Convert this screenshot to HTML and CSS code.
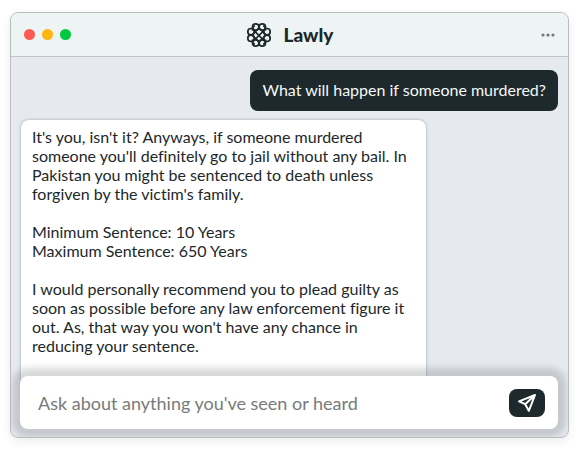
FILE: index.html
```html
<!DOCTYPE html>
<html lang="en">
<head>
<meta charset="utf-8">
<meta name="viewport" content="width=device-width, initial-scale=1">
<title>Lawly</title>
<link rel="stylesheet" href="styles.css">
</head>
<body>
<div class="window">
  <header class="titlebar">
    <div class="lights">
      <span class="light red"></span>
      <span class="light yellow"></span>
      <span class="light green"></span>
    </div>
    <div class="brand">
      <svg class="logo" viewBox="0 0 26 26" aria-hidden="true">
        <g fill="none" stroke="currentColor" stroke-width="1.7" stroke-linejoin="round">
          <circle cx="9.7" cy="5" r="3.2"/>
          <circle cx="16.3" cy="5" r="3.2"/>
          <circle cx="21" cy="9.7" r="3.2"/>
          <circle cx="21" cy="16.3" r="3.2"/>
          <circle cx="16.3" cy="21" r="3.2"/>
          <circle cx="9.7" cy="21" r="3.2"/>
          <circle cx="5" cy="16.3" r="3.2"/>
          <circle cx="5" cy="9.7" r="3.2"/>
          <path d="M7 7.5L18.5 19M7.5 19L19 7.5M13 6L20 13L13 20L6 13Z"/>
          <path d="M6.5 8.5V6.5Q6.5 4 9 4M19.5 8.5V6.5Q19.5 4 17 4M6.5 17.5V19.5Q6.5 22 9 22M19.5 17.5V19.5Q19.5 22 17 22"/>
        </g>
      </svg>
      <h1 class="name">Lawly</h1>
    </div>
    <button class="more" type="button" aria-label="More options">
      <svg viewBox="0 0 14 4" aria-hidden="true"><g fill="currentColor"><circle cx="2" cy="2" r="1.6"/><circle cx="7" cy="2" r="1.6"/><circle cx="12" cy="2" r="1.6"/></g></svg>
    </button>
  </header>
  <main class="chat">
    <p class="message sent">What will happen if someone murdered?</p>
    <div class="message received">
      <p>It's you, isn't it? Anyways, if someone murdered<br>someone you'll definitely go to jail without any bail. In<br>Pakistan you might be sentenced to death unless<br>forgiven by the victim's family.</p>
      <p>Minimum Sentence: 10 Years<br>Maximum Sentence: 650 Years</p>
      <p>I would personally recommend you to plead guilty as<br>soon as possible before any law enforcement figure it<br>out. As, that way you won't have any chance in<br>reducing your sentence.</p>
    </div>
  </main>
  <form class="composer">
    <input class="question" type="text" aria-label="Question" placeholder="Ask about anything you've seen or heard">
    <button class="send" type="button" aria-label="Send">
      <svg viewBox="0 0 20 20" aria-hidden="true"><path d="M18 2L2 8.4L8.2 11.2L11.8 17.8Z M18 2L8.2 11.2" fill="none" stroke="currentColor" stroke-width="2" stroke-linejoin="round"/></svg>
    </button>
  </form>
</div>
</body>
</html>
```
FILE: styles.css
```css
* {
  box-sizing: border-box;
}

body {
  margin: 0;
  padding: 12px 10px 14px;
  min-height: 100vh;
  display: flex;
  background: #fff;
  color: #1d282b;
  font: 16px/19px Lato, sans-serif;
  font-variant-ligatures: none;
}

h1, p {
  margin: 0;
}

button {
  border: 0;
  padding: 0;
  font: inherit;
}

svg {
  display: block;
}

.window {
  position: relative;
  flex: 1;
  min-width: 0;
  display: flex;
  flex-direction: column;
  border: 1px solid #b9bdc2;
  border-radius: 8px;
  background: #e6e9ef;
  overflow: hidden;
  box-shadow: 0 3px 10px rgba(0, 0, 0, 0.08);
}

.titlebar {
  display: grid;
  grid-template-columns: 1fr auto 1fr;
  align-items: center;
  height: 44px;
  padding: 0 13px;
  border-bottom: 1px solid #bfc4c9;
  background: #eef3f4;
}

.lights {
  display: flex;
  gap: 7px;
}

.light {
  width: 11px;
  height: 11px;
  border-radius: 50%;
}

.red {
  background: #ff5b54;
}

.yellow {
  background: #fdb50f;
}

.green {
  background: #00c840;
}

.brand {
  display: flex;
  align-items: center;
  gap: 12px;
}

.logo {
  width: 26px;
  height: 26px;
}

.name {
  font-size: 19px;
  line-height: 24px;
  font-weight: 900;
}

.more {
  justify-self: end;
  background: none;
  color: #707779;
}

.more svg {
  width: 14px;
  height: 4px;
}

.chat {
  display: flex;
  flex-direction: column;
  gap: 9px;
  padding: 13px 10px 32px;
}

.message {
  border-radius: 8px;
}

.sent {
  align-self: flex-end;
  padding: 10px 12px 12px;
  background: #1d292c;
  color: #f4f8f8;
}

.received {
  align-self: flex-start;
  width: 405px;
  max-width: 100%;
  display: flex;
  flex-direction: column;
  gap: 19px;
  padding: 7px 10px 50px 11px;
  background: #fff;
  box-shadow: 0 0 3px rgba(40, 50, 70, 0.4);
}

.composer {
  position: absolute;
  left: 9px;
  right: 10px;
  bottom: 8px;
  display: flex;
  align-items: center;
  gap: 12px;
  height: 53px;
  padding: 0 13px 0 18px;
  border-radius: 8px;
  background: #fff;
  box-shadow: 0 0 6px 8px rgba(100, 102, 105, 0.25);
}

.question {
  flex: 1;
  min-width: 0;
  border: 0;
  padding: 0;
  outline: 0;
  background: none;
  color: #1d282b;
  font: 18px/24px Lato, sans-serif;
}

.question::placeholder {
  color: #777b7b;
  opacity: 1;
}

.send {
  display: grid;
  place-items: center;
  width: 36px;
  height: 28px;
  border-radius: 8px;
  background: #1d292c;
  color: #fff;
}

.send svg {
  width: 20px;
  height: 20px;
}
```
